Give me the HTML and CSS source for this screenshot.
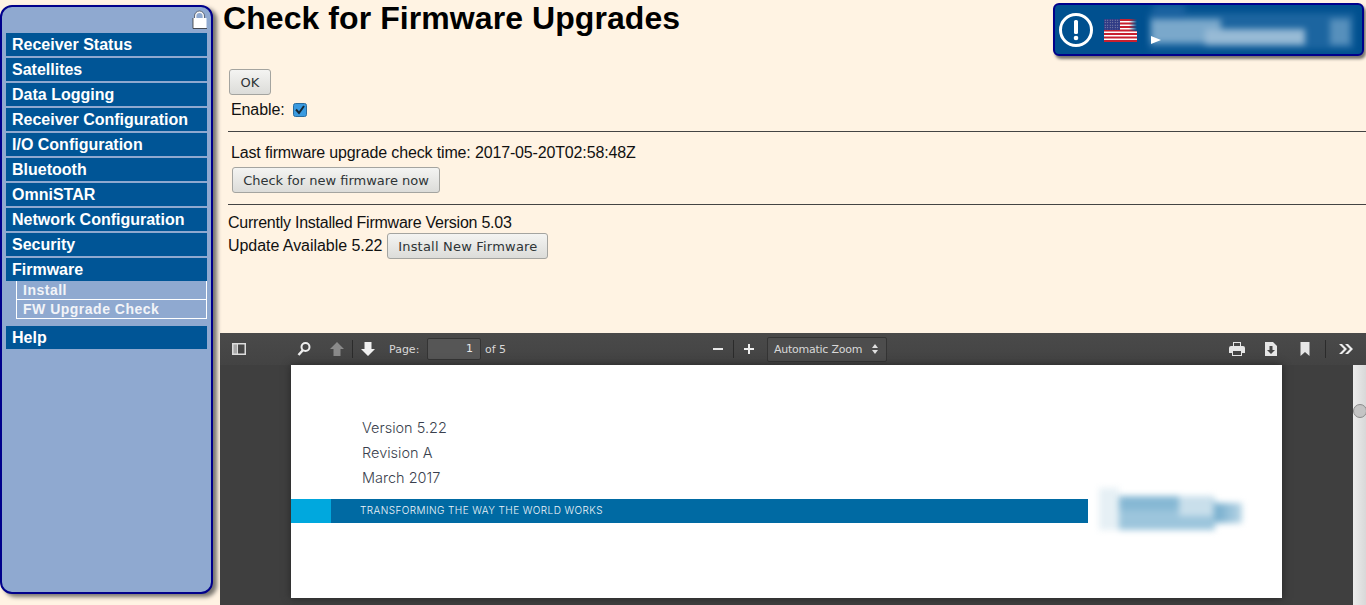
FILE: index.html
```html
<!DOCTYPE html>
<html lang="en">
<head>
<meta charset="utf-8">
<title>Check for Firmware Upgrades</title>
<link rel="stylesheet" href="styles.css">
</head>
<body>
<nav class="sidebar">
  <div class="lock-row">
    <svg class="lock" width="15" height="19" viewBox="0 0 15 19"><path d="M3.500 9V6a4 4 0 0 1 8 0v3" fill="none" stroke="#f6f6f6" stroke-width="1.800"/><path d="M2.500 9V6a5 5 0 0 1 10 0v3" fill="none" stroke="#3a4252" stroke-width="0.700"/><rect x="1" y="8" width="13.500" height="10" fill="#fff"/><path d="M1 8v10.500h14" fill="none" stroke="#333" stroke-width="0.800"/></svg>
  </div>
  <ul class="menu">
    <li class="item">Receiver Status</li>
    <li class="item">Satellites</li>
    <li class="item">Data Logging</li>
    <li class="item">Receiver Configuration</li>
    <li class="item">I/O Configuration</li>
    <li class="item">Bluetooth</li>
    <li class="item">OmniSTAR</li>
    <li class="item">Network Configuration</li>
    <li class="item">Security</li>
    <li class="item">Firmware</li>
    <li class="sub">
      <div class="sub-item">Install</div>
      <div class="sub-item">FW Upgrade Check</div>
    </li>
    <li class="item">Help</li>
  </ul>
</nav>

<div class="banner">
  <svg class="alert" width="36" height="36" viewBox="0 0 36 36"><circle cx="18" cy="18" r="15.500" fill="none" stroke="#fff" stroke-width="3"/><rect x="16" y="8" width="4" height="14" rx="1.500" fill="#fff"/><circle cx="18" cy="26" r="2.300" fill="#fff"/></svg>
  <svg class="flag" width="33" height="23" viewBox="0 0 33 23"><defs><pattern id="stars" width="2.500" height="2.500" patternUnits="userSpaceOnUse"><circle cx="1.200" cy="1.200" r="0.500" fill="#aab"/></pattern><linearGradient id="fade" x1="0" x2="1" y1="0" y2="0"><stop offset="0" stop-color="#00508f" stop-opacity="0"/><stop offset="1" stop-color="#00508f"/></linearGradient></defs><rect width="33" height="23" fill="#fff"/><g fill="#c8202f"><rect width="33" height="2"/><rect y="3.500" width="33" height="2"/><rect y="7" width="33" height="2"/><rect y="10.500" width="33" height="2"/><rect y="14" width="33" height="2"/><rect y="17.500" width="33" height="2"/><rect y="21" width="33" height="2"/></g><rect width="16" height="11" fill="#2f3a85"/><rect width="16" height="11" fill="url(#stars)"/><rect x="25" width="8" height="12" fill="url(#fade)"/></svg>
  <div class="smear">
    <span class="patch p0"></span><span class="patch p1"></span><span class="patch p2"></span><span class="patch p3"></span><span class="patch p4"></span>
  </div>
  <svg class="tri" width="12" height="10" viewBox="0 0 12 10"><path d="M1 1l10 4-10 4z" fill="#fff"/></svg>
</div>

<main class="main">
  <h1 class="title">Check for Firmware Upgrades</h1>
  <section class="form">
    <button class="btn btn-ok" type="button">OK</button>
    <div class="enable"><span>Enable:</span>
      <svg class="check" width="14" height="14" viewBox="0 0 14 14"><rect x="0.500" y="0.500" width="13" height="13" rx="2" fill="#3a9ae0" stroke="#2a6c9f"/><path d="M3 6.500l3 3.500 5-7" fill="none" stroke="#12283a" stroke-width="2"/></svg>
    </div>
    <hr class="rule rule-a">
    <div class="last">Last firmware upgrade check time: 2017-05-20T02:58:48Z</div>
    <button class="btn btn-check" type="button">Check for new firmware now</button>
    <hr class="rule rule-b">
    <div class="current">Currently Installed Firmware Version 5.03</div>
    <div class="update"><span>Update Available 5.22</span><button class="btn btn-install" type="button">Install New Firmware</button></div>
  </section>

  <section class="viewer">
    <div class="toolbar">
      <svg class="ic i-side" width="16" height="16" viewBox="0 0 16 16"><path fill-rule="evenodd" d="M1 2h14v12H1zM7 3.500v9h6.500v-9z" fill="#dcdcdc"/><rect x="2.500" y="3.500" width="3.500" height="9" fill="#a8a8a8"/></svg>
      <svg class="ic i-search" width="16" height="16" viewBox="0 0 16 16"><circle cx="9.500" cy="6" r="4" fill="none" stroke="#eee" stroke-width="2"/><path d="M7 9l-4.500 5" stroke="#eee" stroke-width="2.500"/></svg>
      <svg class="ic i-up" width="16" height="16" viewBox="0 0 16 16"><path d="M8 1l7 7h-3.500v7h-7V8H1z" fill="#8a8a8a"/></svg>
      <span class="tsep t1"></span>
      <svg class="ic i-down" width="16" height="16" viewBox="0 0 16 16"><path d="M4.500 1h7v7H15l-7 7-7-7h3.500z" fill="#f0f0f0"/></svg>
      <span class="tlabel page-label">Page:</span>
      <span class="page-input">1</span>
      <span class="tlabel of">of 5</span>
      <svg class="ic i-minus" width="12" height="16" viewBox="0 0 12 16"><rect x="1" y="7" width="10" height="2" fill="#e8e8e8"/></svg>
      <span class="tsep t2"></span>
      <svg class="ic i-plus" width="12" height="16" viewBox="0 0 12 16"><path d="M5 3h2v4h4v2H7v4H5V9H1V7h4z" fill="#eee"/></svg>
      <span class="zoom">Automatic Zoom<svg width="6" height="10" viewBox="0 0 6 10"><path d="M3 0l3 4H0zM3 10L0 6h6z" fill="#e0e0e0"/></svg></span>
      <svg class="ic i-print" width="16" height="16" viewBox="0 0 16 16"><path fill-rule="evenodd" d="M4 1h8v4h2a2 2 0 0 1 2 2v5h-3v3H3v-3H0V7a2 2 0 0 1 2-2h2zM5 2v3h6V2zM4 10v4h8v-4z" fill="#e6e6e6"/></svg>
      <svg class="ic i-save" width="16" height="16" viewBox="0 0 16 16"><path fill-rule="evenodd" d="M2 1h8l4 4v10H2zM6.500 5v4H4l4 4 4-4H9.500V5z" fill="#e6e6e6"/></svg>
      <svg class="ic i-mark" width="16" height="16" viewBox="0 0 16 16"><path d="M3.500 1h9v14l-4.500-4-4.500 4z" fill="#e6e6e6"/></svg>
      <span class="tsep t3"></span>
      <svg class="ic i-more" width="16" height="16" viewBox="0 0 16 16"><path d="M1 3h3l5 5-5 5H1l5-5zM7 3h3l5 5-5 5H7l5-5z" fill="#eee"/></svg>
    </div>
    <div class="canvas">
      <article class="pdf-page">
        <div class="meta">
          <p>Version 5.22</p>
          <p>Revision A</p>
          <p>March 2017</p>
        </div>
        <div class="band-row">
          <div class="band"><span class="band-cyan"></span><span class="band-text">TRANSFORMING THE WAY THE WORLD WORKS</span></div>
          <div class="logo-smear"><span class="lp l0"></span><span class="lp l1"></span><span class="lp l2"></span><span class="lp l3"></span><span class="lp l4"></span></div>
        </div>
      </article>
      <div class="scrollbar"><span class="thumb"></span></div>
    </div>
  </section>
</main>
</body>
</html>
```
FILE: styles.css
```css
* { box-sizing: border-box; }
html, body { height: 100%; }
body {
  margin: 0;
  height: 605px;
  overflow: hidden;
  display: flex;
  background: #fff3e3;
  font-family: "Liberation Sans", Arial, sans-serif;
  color: #111;
}

/* sidebar */
.sidebar {
  flex: 0 0 213px;
  height: 589px;
  margin-top: 5px;
  padding: 0 4px;
  background: #8fa9d0;
  border: 2px solid #00008b;
  border-radius: 12px;
  box-shadow: 4px 3px 4px #77746f;
}
.lock-row { height: 26px; display: flex; justify-content: flex-end; padding: 3px 0 0; }
.lock { display: block; }
.menu { list-style: none; margin: 0; padding: 0; }
.item {
  height: 23px;
  margin-bottom: 2px;
  padding-left: 6px;
  background: #005596;
  color: #fff;
  font-weight: bold;
  font-size: 16px;
  line-height: 23px;
  white-space: nowrap;
}
.sub { margin: -2px 0 7px 10px; border-left: 1px solid #fff; border-right: 1px solid #fff; }
.sub-item {
  height: 19px;
  padding-left: 6px;
  border-bottom: 1px solid #fff;
  color: #f2f4f8;
  font-weight: bold;
  font-size: 14px;
  line-height: 18px;
  letter-spacing: 0.5px;
}

/* banner */
.banner {
  position: absolute;
  left: 1053px;
  top: 3px;
  width: 311px;
  height: 53px;
  background: #00508f;
  border: 2px solid #00008b;
  border-radius: 6px;
  box-shadow: 2px 3px 3px #77746f;
  overflow: hidden;
}
.alert { position: absolute; left: 3px; top: 7px; }
.flag { position: absolute; left: 49px; top: 14px; }
.smear { position: absolute; left: 90px; top: 0; width: 215px; height: 49px; filter: blur(3px); }
.patch { position: absolute; display: block; }
.p0 { left: 4px; top: 8px; width: 205px; height: 36px; background: #1c65a0; }
.p1 { left: 6px; top: 14px; width: 70px; height: 24px; background: #7aa8cb; }
.p2 { left: 60px; top: 24px; width: 100px; height: 16px; background: #97bad5; }
.p3 { left: 8px; top: 0; width: 32px; height: 14px; background: #1a62a0; }
.p4 { left: 185px; top: 14px; width: 20px; height: 26px; background: #5790bc; }
.tri { position: absolute; left: 95px; top: 30px; }

/* main */
.main { flex: 1 1 0; min-width: 0; margin-left: 7px; display: flex; flex-direction: column; height: 605px; }
.title {
  margin: 0 0 0 3px;
  height: 69px;
  font-size: 32px;
  line-height: 37px;
  font-weight: bold;
  letter-spacing: 0.07px;
  color: #000;
}
.form { height: 264px; font-size: 16px; }
.btn {
  display: block;
  margin: 0;
  padding: 0;
  height: 26px;
  font-family: "DejaVu Sans", sans-serif;
  font-size: 13px;
  color: #2e3436;
  background: linear-gradient(#f4f4f2, #dcdcd9);
  border: 1px solid #a4a4a0;
  border-radius: 3px;
}
.btn-ok { margin-left: 9px; width: 42px; }
.enable { display: flex; align-items: center; margin: 4px 0 0 11px; height: 21px; }
.enable span { letter-spacing: -0.1px; }
.check { margin-left: 8px; }
.rule { margin: 0 0 0 8px; border: 0; height: 1px; background: #444; }
.rule-a { margin-top: 11px; }
.last { margin: 11px 0 0 11px; height: 20px; line-height: 20px; white-space: nowrap; letter-spacing: -0.15px; }
.btn-check { margin: 4px 0 0 12px; width: 208px; }
.rule-b { margin-top: 11px; }
.current { margin: 8px 0 0 8px; height: 20px; line-height: 20px; letter-spacing: -0.24px; }
.update { display: flex; align-items: center; margin: 0 0 0 8px; height: 26px; letter-spacing: -0.05px; }
.btn-install { margin-left: 5px; width: 161px; letter-spacing: 0.2px; }

/* viewer */
.viewer { flex: 1 1 0; min-height: 0; display: flex; flex-direction: column; background: #3f3f3f; }
.toolbar {
  flex: 0 0 32px;
  display: flex;
  align-items: center;
  padding-left: 11px;
  background: linear-gradient(#4a4a4a, #434343);
  color: #d8d8d8;
  font-family: "DejaVu Sans", sans-serif;
  font-size: 11px;
}
.ic { flex: none; display: block; }
.i-search { margin-left: 49px; }
.i-up { margin-left: 17px; }
.tsep { flex: none; width: 1px; height: 18px; background: #2b2b2b; }
.t1 { margin-left: 7px; }
.i-down { margin-left: 7px; }
.page-label { margin-left: 13px; width: 38px; }
.page-input {
  width: 54px;
  height: 22px;
  padding-right: 7px;
  text-align: right;
  line-height: 20px;
  color: #e8e8e8;
  background: #565656;
  border: 1px solid #343434;
  border-radius: 2px;
}
.of { margin-left: 4px; width: 24px; white-space: nowrap; }
.i-minus { margin-left: 203px; }
.t2 { margin-left: 9px; }
.i-plus { margin-left: 9px; }
.zoom {
  margin-left: 12px;
  width: 120px;
  height: 25px;
  padding: 0 8px 0 6px;
  display: flex;
  align-items: center;
  justify-content: space-between;
  background: #4d4d4d;
  border: 1px solid #343434;
  border-radius: 2px;
  white-space: nowrap;
  letter-spacing: -0.25px;
}
.i-print { margin-left: 342px; }
.i-save { margin-left: 18px; }
.i-mark { margin-left: 18px; }
.t3 { margin-left: 12px; }
.i-more { margin-left: 12px; }

.canvas { flex: 1 1 0; min-height: 0; display: flex; background: #3f3f3f; }
.pdf-page {
  flex: none;
  width: 991px;
  height: 233px;
  margin-left: 71px;
  background: #fff;
  box-shadow: 0 0 8px #262626;
  overflow: hidden;
}
.meta { height: 134px; padding: 50px 0 0 71px; font-family: Inter, sans-serif; font-weight: 300; font-size: 14.500px; color: #3a3f4e; }
.meta p { margin: 0; height: 25px; line-height: 25px; white-space: nowrap; }
.band-row { display: flex; }
.band {
  width: 797px;
  height: 24px;
  display: flex;
  align-items: center;
  background: #006aa3;
}
.band-cyan { flex: none; width: 40px; height: 24px; background: #00a8de; }
.band-text { margin: 0 0 2px 29px; font-family: Inter, sans-serif; font-size: 10px; font-weight: 300; letter-spacing: 0.42px; color: #eef5f9; white-space: nowrap; }
.logo-smear { position: relative; width: 143px; height: 42px; margin: -11px 0 0 11px; filter: blur(3px); }
.lp { position: absolute; display: block; }
.l0 { left: 0; top: 0; width: 20px; height: 42px; background: #e6f0f5; }
.l1 { left: 20px; top: 10px; width: 96px; height: 32px; background: #9cc5dc; }
.l2 { left: 20px; top: 8px; width: 60px; height: 14px; background: #86b8d4; }
.l3 { left: 80px; top: 8px; width: 34px; height: 20px; background: #c9dfeb; }
.l4 { left: 116px; top: 15px; width: 27px; height: 20px; background: linear-gradient(90deg, #72abcc, #b9d6e6); }
.scrollbar {
  flex: none;
  position: relative;
  width: 13px;
  margin-left: 71px;
  background: linear-gradient(90deg, #ececec, #d8d8d8);
}
.thumb { position: absolute; left: 0; top: 39px; width: 14px; height: 14px; border-radius: 50%; background: #c4c4c4; border: 1px solid #8a8a8a; }
```
